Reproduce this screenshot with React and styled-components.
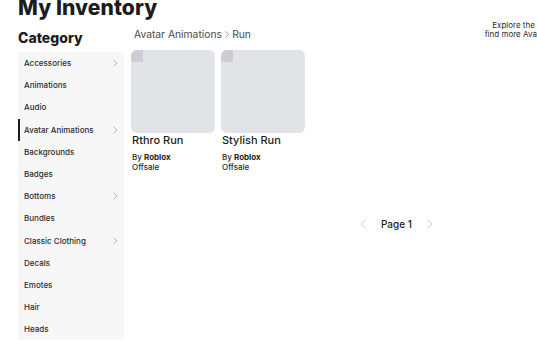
import React from "react";
import styled, { createGlobalStyle } from "styled-components";

const Global = createGlobalStyle`
  html, body { margin: 0; padding: 0; background: #fff; overflow: hidden; }
  body { font-family: Inter, "Noto Sans", sans-serif; color: #1b1c20; }
  * { box-sizing: border-box; }
`;

const Page = styled.div`
  padding-left: 18px;
  width: 537px;
  height: 342px;
  overflow: hidden;
`;

const Title = styled.h1`
  margin: -6px 0 0;
  font-size: 21px;
  line-height: 28px;
  font-weight: 800;
  letter-spacing: 0.1px;
  white-space: nowrap;
`;

const Body = styled.div`
  display: flex;
  align-items: flex-start;
`;

const SideCol = styled.div`
  width: 106px;
  flex: none;
  padding-top: 7px;
`;

const Heading = styled.h2`
  margin: 0 0 5px;
  font-size: 14px;
  line-height: 18px;
  font-weight: 800;
`;

const List = styled.ul`
  list-style: none;
  margin: 0;
  padding: 0;
  background: #f7f7f7;
`;

const Item = styled.li`
  height: 22.2px;
  display: flex;
  align-items: center;
  justify-content: space-between;
  padding: 0 6px 0 4px;
  font-size: 8px;
  font-weight: 500;
  color: #2b2c30;
  border-left: 2px solid ${(p) => (p.$active ? "#1b1c20" : "transparent")};
`;

const Chevron = ({ dir = "right", size = 8, color = "#9a9ba0" }) => (
  <svg width={size * 0.6} height={size} viewBox="0 0 6 10" fill="none">
    <polyline
      points={dir === "right" ? "1,1 5,5 1,9" : "5,1 1,5 5,9"}
      stroke={color}
      strokeWidth="0.9"
      strokeLinecap="round"
      strokeLinejoin="round"
    />
  </svg>
);

const Main = styled.div`
  width: 340px;
  flex: none;
  margin-left: 7px;
  padding-top: 5px;
`;

const Crumbs = styled.div`
  display: flex;
  align-items: center;
  gap: 3px;
  margin-left: 3px;
  font-size: 10.3px;
  line-height: 14px;
  color: #4a4b50;
  margin-bottom: 9px;
`;

const Cards = styled.div`
  display: flex;
  gap: 6px;
`;

const Card = styled.div`
  width: 84px;
`;

const Thumb = styled.div`
  height: 83px;
  border-radius: 6px;
  background: #e2e3e7;
  overflow: hidden;
  &::before {
    content: "";
    display: block;
    width: 12px;
    height: 12px;
    background: #cdced5;
  }
`;

const Name = styled.div`
  margin-left: 1px;
  font-size: 11px;
  line-height: 14px;
  font-weight: 500;
  color: #1b1c20;
`;

const Meta = styled.div`
  margin-left: 1px;
  margin-top: ${(p) => (p.$first ? "6px" : "0")};
  font-size: 8px;
  line-height: 9.6px;
  font-weight: 500;
  color: #2b2c30;
  b { font-weight: 700; color: #1b1c20; }
`;

const Pager = styled.div`
  display: flex;
  align-items: center;
  height: 20px;
  margin-top: 42px;
  margin-left: 229px;
  gap: 15px;
  font-size: 10px;
  font-weight: 500;
  color: #1b1c20;
`;

const Side = styled.div`
  width: 130px;
  flex: none;
  margin-left: 2px;
  margin-top: -1px;
  text-align: center;
  font-size: 8px;
  line-height: 9px;
  color: #2b2c30;
  white-space: nowrap;
`;

const categories = [
  ["Accessories", true],
  ["Animations"],
  ["Audio"],
  ["Avatar Animations", true, true],
  ["Backgrounds"],
  ["Badges"],
  ["Bottoms", true],
  ["Bundles"],
  ["Classic Clothing", true],
  ["Decals"],
  ["Emotes"],
  ["Hair"],
  ["Heads"],
];

const items = ["Rthro Run", "Stylish Run"];

export default function App() {
  return (
    <>
      <Global />
      <Page>
        <Title>My Inventory</Title>
        <Body>
          <SideCol>
            <Heading>Category</Heading>
            <List>
              {categories.map(([label, sub, active]) => (
                <Item key={label} $active={active}>
                  <span>{label}</span>
                  {sub && <Chevron />}
                </Item>
              ))}
            </List>
          </SideCol>
          <Main>
            <Crumbs>
              <span>Avatar Animations</span>
              <Chevron size={7} color="#6a6b70" />
              <span>Run</span>
            </Crumbs>
            <Cards>
              {items.map((n) => (
                <Card key={n}>
                  <Thumb />
                  <Name>{n}</Name>
                  <Meta $first>
                    By <b>Roblox</b>
                  </Meta>
                  <Meta>Offsale</Meta>
                </Card>
              ))}
            </Cards>
            <Pager>
              <Chevron dir="left" size={10} color="#c4c5c9" />
              <span>Page 1</span>
              <Chevron size={10} color="#c4c5c9" />
            </Pager>
          </Main>
          <Side>
            Explore the marketplace
            <br />
            find more Avatar Animations
          </Side>
        </Body>
      </Page>
    </>
  );
}
